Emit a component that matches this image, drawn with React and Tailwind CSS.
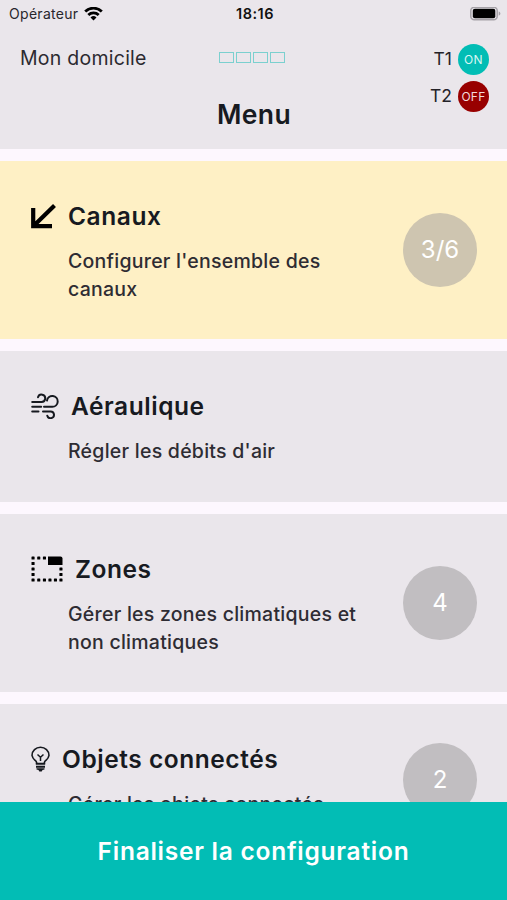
const menuItems = [
  {
    title: "Canaux",
    text: "Configurer l'ensemble des canaux",
    badge: "3/6",
    icon: ArrowIcon,
    active: true,
    height: "h-[178px]",
  },
  {
    title: "Aéraulique",
    text: "Régler les débits d'air",
    icon: WindIcon,
    height: "h-[151px]",
  },
  {
    title: "Zones",
    text: "Gérer les zones climatiques et non climatiques",
    badge: "4",
    icon: ZoneIcon,
    height: "h-[178px]",
  },
  {
    title: "Objets connectés",
    text: "Gérer les objets connectés",
    badge: "2",
    icon: BulbIcon,
    height: "h-[151px]",
  },
];

function ArrowIcon() {
  return (
    <svg width="25" height="26" viewBox="0 0 25 26" fill="none" stroke="#000" strokeWidth="4.2">
      <path d="M2.2 5v18.2H21M2.5 23L23.5 2.5" />
    </svg>
  );
}

function WindIcon() {
  return (
    <svg width="28" height="26" viewBox="0 0 28 26" fill="none" stroke="#16191f" strokeWidth="2" strokeLinecap="round">
      <path d="M1.2 9h9.3a3.7 3.7 0 1 0-3.5-4.8" />
      <path d="M1.2 13.8h9M13 13.8h8.3a5.4 5.4 0 1 0-5.3-6.3" />
      <path d="M1.2 18.4h6.3M12 18.4h7.5a3.4 3.4 0 1 1-3.2 4.3" />
    </svg>
  );
}

function ZoneIcon() {
  return (
    <svg width="32" height="26" viewBox="0 0 32 26" fill="#000">
      {[0.5, 6.2, 11.9].map((x) => (
        <rect key={x} x={x} y=".4" width="3.1" height="3.1" rx=".6" />
      ))}
      {[0.5, 6.2, 11.9, 17.4, 22.9, 28.4].map((x) => (
        <rect key={x} x={x} y="22.4" width="3.1" height="3.1" rx=".6" />
      ))}
      {[5.9, 11.4, 16.9].map((y) => (
        <rect key={y} x=".5" y={y} width="3.1" height="3.1" rx=".6" />
      ))}
      {[11.4, 16.9].map((y) => (
        <rect key={y} x="28.4" y={y} width="3.1" height="3.1" rx=".6" />
      ))}
      <path d="M17 .4h12.5a2 2 0 0 1 2 2v6.7H17z" />
    </svg>
  );
}

function BulbIcon() {
  return (
    <svg width="19" height="26" viewBox="0 0 19 26" fill="none" stroke="#16191f" strokeWidth="1.6">
      <path d="M5.6 17.5v-1c0-1-.8-1.6-1.8-2.4A8.2 8.2 0 0 1 1 9.4C1 4.8 4.8 1.3 9.5 1.3S18 4.8 18 9.4a8 8 0 0 1-2.8 4.7c-1 .8-1.8 1.4-1.8 2.4v1" />
      <path d="M6.5 8.5l3 2.7 3-2.7M9.5 11.2V15" strokeWidth="1.5" />
      <path d="M4.8 17.8h9.4M5 20.7h9" strokeWidth="2.1" />
      <path d="M5.5 22.2h8v1.3l-2 .6-.8 1.3H8.3l-.8-1.3-2-.6z" fill="#16191f" stroke="none" />
    </svg>
  );
}

function StatusBar() {
  return (
    <div className="flex h-[28px] items-center justify-between pl-[9px] pr-[6px]">
      <div className="flex w-[200px] items-center gap-[6px] text-[14px] leading-none text-[#28262c]">
        <span className="tracking-[0.3px]">Opérateur</span>
        <svg width="19" height="15" viewBox="0 0 19 15" fill="none" stroke="#000" strokeWidth="2.8">
          <path d="M1.2 4.5a12 12 0 0 1 16.6 0" />
          <path d="M4.3 7.9a7.500 7.500 0 0 1 10.4 0" />
          <path d="M9.5 13.5L6.5 10.500a4.3 4.3 0 0 1 6 0z" fill="#000" stroke="none" />
        </svg>
      </div>
      <span className="text-[14.5px] font-semibold tracking-[0.5px] text-[#111]">18:16</span>
      <div className="flex w-[200px] justify-end">
        <svg width="31" height="14" viewBox="0 0 31 14">
          <rect x=".8" y=".3" width="26.4" height="12.4" rx="3.5" fill="none" stroke="#a5a1a7" strokeWidth="1.5" />
          <rect x="2.8" y="1.8" width="22.5" height="9.4" rx="2" fill="#000" />
          <path d="M28.7 4.5v4.2c1-.4 1.7-1.1 1.7-2.1s-.7-1.7-1.7-2.1z" fill="#a5a1a7" />
        </svg>
      </div>
    </div>
  );
}

function Header() {
  return (
    <header className="h-[149px] shrink-0 bg-[#eae6eb]">
      <StatusBar />
      <div className="grid grid-cols-[1fr_auto_1fr] pl-[19px] pr-[18px]">
        <p className="pl-px pt-[16px] text-[19.5px] leading-[28px] tracking-[0.25px] text-[#2c2a30]">Mon domicile</p>
        <div className="flex flex-col items-center">
          <div className="flex gap-[2px] pr-[4px] pt-[24px]">
            {[1, 2, 3, 4].map((n) => (
              <span key={n} className="h-[11px] w-[15px] border border-[#7bd0cf]" />
            ))}
          </div>
          <h1 className="mt-[33px] text-[26.5px] font-semibold leading-[36px] tracking-[0.4px] text-[#171a21]">Menu</h1>
        </div>
        <div className="flex flex-col items-end gap-[6px] pt-[16px] text-[17.5px] text-[#242228]">
          <div className="flex items-center gap-[6px]">
            T1
            <span className="flex h-[31px] w-[31px] items-center justify-center rounded-full bg-[#02bdb5] text-[12px] tracking-[0.3px] text-[#d9f7f4]">ON</span>
          </div>
          <div className="flex items-center gap-[6px]">
            T2
            <span className="flex h-[31px] w-[31px] items-center justify-center rounded-full bg-[#980000] text-[12px] tracking-[0.3px] text-[#f3dada]">OFF</span>
          </div>
        </div>
      </div>
    </header>
  );
}

function MenuCard({ item }) {
  const Icon = item.icon;
  return (
    <section
      className={`flex shrink-0 items-center justify-between pl-[31px] pr-[30px] ${item.height} ${
        item.active ? "bg-[#fef0c5]" : "bg-[#eae6eb]"
      }`}
    >
      <div className="h-full pt-[37px]">
        <div className="flex h-[36px] items-center gap-[12px]">
          <Icon />
          <h2 className="whitespace-nowrap text-[24.5px] font-semibold leading-[34px] tracking-[0.55px] text-[#171a21]">
            {item.title}
          </h2>
        </div>
        <p className="mt-[13px] box-content w-[300px] pl-[37px] text-[19.5px] font-medium leading-[28px] tracking-[0.25px] text-[#2e2c33]">
          {item.text}
        </p>
      </div>
      {item.badge && (
        <span
          className={`-ml-[40px] flex h-[74px] w-[74px] shrink-0 items-center justify-center rounded-full text-[24px] text-white ${
            item.active ? "bg-[#cec5b0]" : "bg-[#c1bec1]"
          }`}
        >
          {item.badge}
        </span>
      )}
    </section>
  );
}

export default function App() {
  return (
    <div className="flex h-[900px] w-[507px] flex-col overflow-hidden bg-[#fdf7fe] font-['Inter',sans-serif]">
      <Header />
      <main className="flex min-h-0 flex-1 flex-col gap-[12px] overflow-hidden pt-[12px]">
        {menuItems.map((item) => (
          <MenuCard key={item.title} item={item} />
        ))}
      </main>
      <button className="h-[98px] shrink-0 bg-[#02bdb5] pt-px text-[24.5px] font-semibold tracking-[0.75px] text-white">
        Finaliser la configuration
      </button>
    </div>
  );
}
